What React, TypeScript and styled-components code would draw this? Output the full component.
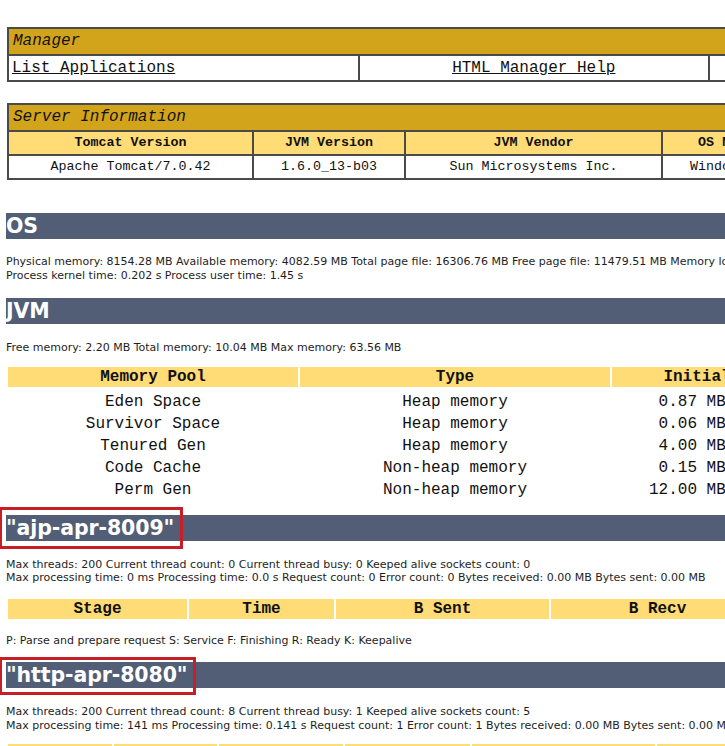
import styled, {createGlobalStyle} from "styled-components";

const GlobalStyle = createGlobalStyle`
    html, body {
        margin: 0;
        padding: 0;
        background: #ffffff;
        overflow: hidden;
    }
`;

const Page = styled.div`
    width: 1418px;
    padding: 27px 0 0 6px;
    font-family: "DejaVu Sans", Tahoma, sans-serif;
    color: #1e1e1e;
`;

const BoxTable = styled.table<{ $mt?: number }>`
    border-collapse: collapse;
    width: 1404px;
    margin: ${({$mt}) => $mt ?? 0}px 0 0 1px;
    border: 2px solid #4a4a4a;
    font-family: "Liberation Mono", "Courier New", monospace;
    color: #111;
    table-layout: fixed;
`;

const TitleCell = styled.td`
    background: #d2a41c;
    font-style: italic;
    font-size: 16px;
    line-height: 19px;
    padding: 3px 4px;
    border: 2px solid #4a4a4a;
    text-align: left;
`;

const LinkCell = styled.td<{ $align: "left" | "center" | "right" }>`
    background: #ffffff;
    font-size: 16px;
    line-height: 20px;
    padding: 2px 3px;
    border: 2px solid #4a4a4a;
    text-align: ${({$align}) => $align};
`;

const PlainLink = styled.a`
    color: #111;
    text-decoration: underline;
`;

const HeadCell = styled.td`
    background: #ffdc75;
    font-size: 13.33px;
    font-weight: bold;
    line-height: 16px;
    padding: 3px 2px;
    border: 2px solid #4a4a4a;
    text-align: center;
    white-space: nowrap;
    overflow: hidden;
`;

const DataCell = styled.td`
    background: #ffffff;
    font-size: 13.33px;
    line-height: 16px;
    padding: 3px 2px;
    border: 2px solid #4a4a4a;
    text-align: center;
    white-space: nowrap;
    overflow: hidden;
`;

const Heading = styled.h1<{ $mt: number }>`
    margin: ${({$mt}) => $mt}px 0 0 0;
    height: 26px;
    line-height: 26px;
    padding: 0;
    background: #525d76;
    color: #ffffff;
    font-family: "DejaVu Sans", Tahoma, sans-serif;
    font-weight: bold;
    font-size: 20.5px;
    letter-spacing: -0.1px;
`;

const Marked = styled.span<{ $top: number; $bottom: number }>`
    position: relative;

    &::after {
        content: "";
        position: absolute;
        left: -7px;
        right: -9px;
        top: ${({$top}) => $top}px;
        bottom: ${({$bottom}) => $bottom}px;
        border: 3px solid #c81e25;
    }
`;

const Info = styled.p<{ $mt: number }>`
    margin: ${({$mt}) => $mt}px 0 0 0;
    font-size: 11px;
    line-height: 13.5px;
    white-space: nowrap;
`;

const PoolTable = styled.table<{ $mt: number }>`
    border-collapse: separate;
    border-spacing: 2px;
    margin: ${({$mt}) => $mt}px 0 0 0;
    font-family: "Liberation Mono", "Courier New", monospace;
    font-size: 16px;
    color: #111;
    table-layout: fixed;
`;

const PoolHead = styled.th<{ $w: number }>`
    width: ${({$w}) => $w}px;
    height: 20px;
    padding: 0;
    line-height: 20px;
    background: #ffdc75;
    font-weight: bold;
    text-align: center;
    white-space: nowrap;
`;

const PoolCell = styled.td<{ $left?: boolean }>`
    height: 20px;
    padding: 0 0 0 ${({$left}) => ($left ? 37 : 0)}px;
    line-height: 20px;
    text-align: ${({$left}) => ($left ? "left" : "center")};
    white-space: pre;
`;

const PoolRow = styled.tr`
    &:first-child td {
        padding-top: 3px;
    }
`;

const pools = [
    ["Eden Space", "Heap memory", " 0.87 MB", " 4.56 MB", " 17.31 MB", " 2.01 MB"],
    ["Survivor Space", "Heap memory", " 0.06 MB", " 0.56 MB", " 2.13 MB", " 0.00 MB"],
    ["Tenured Gen", "Heap memory", " 4.00 MB", " 4.91 MB", " 43.56 MB", " 5.72 MB"],
    ["Code Cache", "Non-heap memory", " 0.15 MB", " 0.65 MB", " 32.00 MB", " 0.63 MB"],
    ["Perm Gen", "Non-heap memory", "12.00 MB", "12.00 MB", " 64.00 MB", " 9.84 MB"],
];

const ajpCols = [179, 145, 213, 213, 200, 200, 240];
const httpCols = [104, 103, 124, 125, 183, 200, 550];
const stageNames = ["Stage", "Time", "B Sent", "B Recv", "Client", "VHost", "Request"];

function StageTable({cols, mt}: { cols: number[]; mt: number }) {
    return (
        <PoolTable $mt={mt}>
            <thead>
            <tr>
                {stageNames.map((n, i) => (
                    <PoolHead key={n} $w={cols[i]}>{n}</PoolHead>
                ))}
            </tr>
            </thead>
        </PoolTable>
    );
}

export default function App() {
    return (
        <>
            <GlobalStyle/>
            <Page>
                <BoxTable>
                    <tbody>
                    <tr>
                        <TitleCell colSpan={4}>Manager</TitleCell>
                    </tr>
                    <tr>
                        <LinkCell $align="left"><PlainLink href="#">List Applications</PlainLink></LinkCell>
                        <LinkCell $align="center"><PlainLink href="#">HTML Manager Help</PlainLink></LinkCell>
                        <LinkCell $align="center"><PlainLink href="#">Manager Help</PlainLink></LinkCell>
                        <LinkCell $align="right"><PlainLink href="#">Complete Server Status</PlainLink></LinkCell>
                    </tr>
                    </tbody>
                </BoxTable>

                <BoxTable $mt={21}>
                    <colgroup>
                        <col style={{width: 245}}/>
                        <col style={{width: 152}}/>
                        <col style={{width: 257}}/>
                        <col style={{width: 128}}/>
                        <col style={{width: 128}}/>
                        <col style={{width: 170}}/>
                        <col style={{width: 150}}/>
                        <col/>
                    </colgroup>
                    <tbody>
                    <tr>
                        <TitleCell colSpan={8}>Server Information</TitleCell>
                    </tr>
                    <tr>
                        <HeadCell>Tomcat Version</HeadCell>
                        <HeadCell>JVM Version</HeadCell>
                        <HeadCell>JVM Vendor</HeadCell>
                        <HeadCell>OS Name</HeadCell>
                        <HeadCell>OS Version</HeadCell>
                        <HeadCell>OS Architecture</HeadCell>
                        <HeadCell>Hostname</HeadCell>
                        <HeadCell>IP Address</HeadCell>
                    </tr>
                    <tr>
                        <DataCell>Apache Tomcat/7.0.42</DataCell>
                        <DataCell>1.6.0_13-b03</DataCell>
                        <DataCell>Sun Microsystems Inc.</DataCell>
                        <DataCell>Windows 7</DataCell>
                        <DataCell>6.1</DataCell>
                        <DataCell>x86</DataCell>
                        <DataCell>PC-201308</DataCell>
                        <DataCell>192.168.1.100</DataCell>
                    </tr>
                    </tbody>
                </BoxTable>

                <Heading $mt={33}>OS</Heading>
                <Info $mt={16}>
                    Physical memory: 8154.28 MB Available memory: 4082.59 MB Total page file: 16306.76 MB Free page
                    file: 11479.51 MB Memory load: 49<br/>
                    Process kernel time: 0.202 s Process user time: 1.45 s
                </Info>

                <Heading $mt={16}>JVM</Heading>
                <Info $mt={17}>Free memory: 2.20 MB Total memory: 10.04 MB Max memory: 63.56 MB</Info>

                <PoolTable $mt={10}>
                    <thead>
                    <tr>
                        <PoolHead $w={290}>Memory Pool</PoolHead>
                        <PoolHead $w={310}>Type</PoolHead>
                        <PoolHead $w={170}>Initial</PoolHead>
                        <PoolHead $w={170}>Total</PoolHead>
                        <PoolHead $w={170}>Maximum</PoolHead>
                        <PoolHead $w={170}>Used</PoolHead>
                    </tr>
                    </thead>
                    <tbody>
                    {pools.map((p) => (
                        <PoolRow key={p[0]}>
                            <PoolCell>{p[0]}</PoolCell>
                            <PoolCell>{p[1]}</PoolCell>
                            <PoolCell $left>{p[2]}</PoolCell>
                            <PoolCell $left>{p[3]}</PoolCell>
                            <PoolCell $left>{p[4]}</PoolCell>
                            <PoolCell $left>{p[5]}</PoolCell>
                        </PoolRow>
                    ))}
                    </tbody>
                </PoolTable>

                <Heading $mt={13}><Marked $top={-9} $bottom={-9}>"ajp-apr-8009"</Marked></Heading>
                <Info $mt={17}>
                    Max threads: 200 Current thread count: 0 Current thread busy: 0 Keeped alive sockets count: 0<br/>
                    Max processing time: 0 ms Processing time: 0.0 s Request count: 0 Error count: 0 Bytes received:
                    0.00 MB Bytes sent: 0.00 MB
                </Info>
                <StageTable cols={ajpCols} mt={12}/>
                <Info $mt={13}>P: Parse and prepare request S: Service F: Finishing R: Ready K: Keepalive</Info>

                <Heading $mt={15}><Marked $top={-6} $bottom={-8}>"http-apr-8080"</Marked></Heading>
                <Info $mt={17}>
                    Max threads: 200 Current thread count: 8 Current thread busy: 1 Keeped alive sockets count: 5<br/>
                    Max processing time: 141 ms Processing time: 0.141 s Request count: 1 Error count: 1 Bytes
                    received: 0.00 MB Bytes sent: 0.00 MB
                </Info>
                <StageTable cols={httpCols} mt={10}/>
            </Page>
        </>
    );
}
